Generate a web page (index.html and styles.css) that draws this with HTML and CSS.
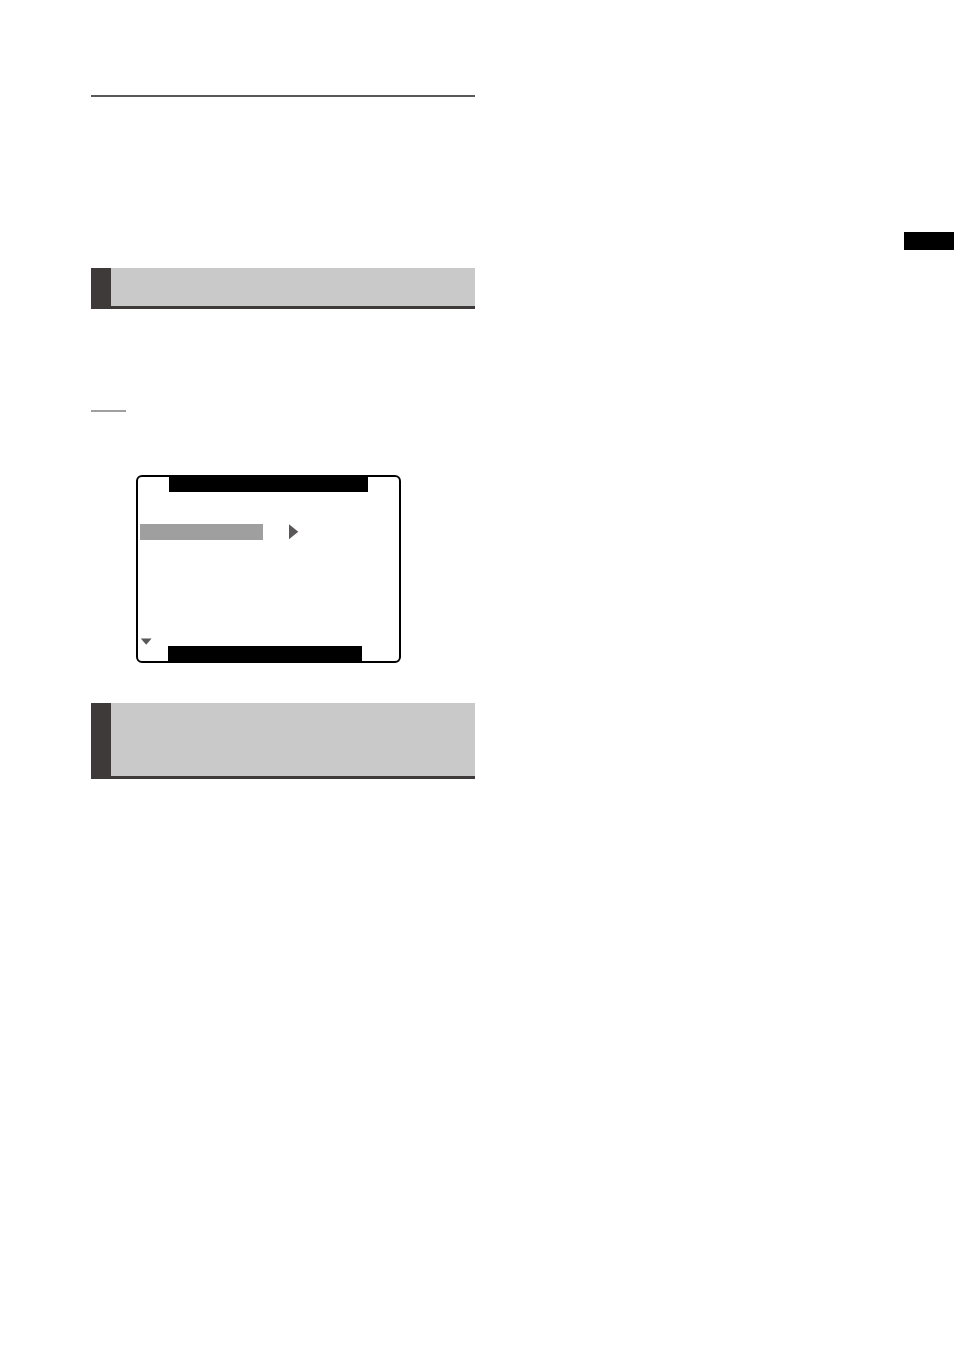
FILE: index.html
```html
<!DOCTYPE html>
<html lang="en">
<head>
<meta charset="utf-8">
<meta name="viewport" content="width=device-width, initial-scale=1">
<title>Manual page</title>
<link rel="stylesheet" href="styles.css">
</head>
<body>
<main class="page">
  <div class="column">
    <hr class="rule">
    <div class="heading"></div>
    <hr class="note-rule">
    <div class="screen">
      <div class="title-bar"></div>
      <div class="menu-row">
        <div class="selection"></div>
        <svg class="arrow-right" viewBox="0 0 10 16" aria-hidden="true"><path d="M0 0.3L9.3 7.8L0 15.3Z" fill="#595757"/></svg>
      </div>
      <svg class="arrow-down" viewBox="0 0 12 7" aria-hidden="true"><path d="M0.8 0.5H11.6L6.2 6.8Z" fill="#595757"/></svg>
      <div class="status-bar"></div>
    </div>
    <div class="heading heading-tall"></div>
  </div>
  <aside class="side-tab"></aside>
</main>
</body>
</html>
```
FILE: styles.css
```css
body {
  margin: 0;
  background: #fff;
  font-family: "Liberation Sans", Arial, sans-serif;
}

.page {
  display: flex;
  justify-content: space-between;
  align-items: flex-start;
  box-sizing: border-box;
  min-height: 100vh;
  padding: 95px 0 95px 91px;
}

.column {
  flex: 0 1 384px;
}

.rule,
.note-rule {
  height: 2px;
  margin: 0;
  border: 0;
  background: #595757;
}

.note-rule {
  width: 35px;
  margin-top: 101px;
  background: #9f9f9f;
}

.heading {
  height: 38px;
  margin-top: 171px;
  border: 0 solid #3e3a39;
  border-width: 0 0 3px 20px;
  background: #c9c9c9;
}

.heading-tall {
  height: 73px;
  margin-top: 40px;
}

.screen {
  display: flex;
  flex-direction: column;
  box-sizing: border-box;
  width: 265px;
  min-height: 188px;
  margin: 63px 0 0 45px;
  border: 2px solid #000;
  border-radius: 6px;
}

.title-bar {
  width: 199px;
  height: 15px;
  margin-left: 31px;
  background: #000;
}

.menu-row {
  display: flex;
  gap: 26px;
  margin: 32px 0 0 2px;
}

.selection {
  width: 123px;
  height: 16px;
  background: #9f9f9f;
}

.arrow-right {
  width: 10px;
  height: 16px;
}

.arrow-down {
  width: 12px;
  height: 7px;
  margin: auto 0 1px 2px;
}

.status-bar {
  width: 194px;
  height: 15px;
  margin-left: 30px;
  background: #000;
}

.side-tab {
  width: 50px;
  height: 18px;
  margin-top: 137px;
  background: #000;
}
```
